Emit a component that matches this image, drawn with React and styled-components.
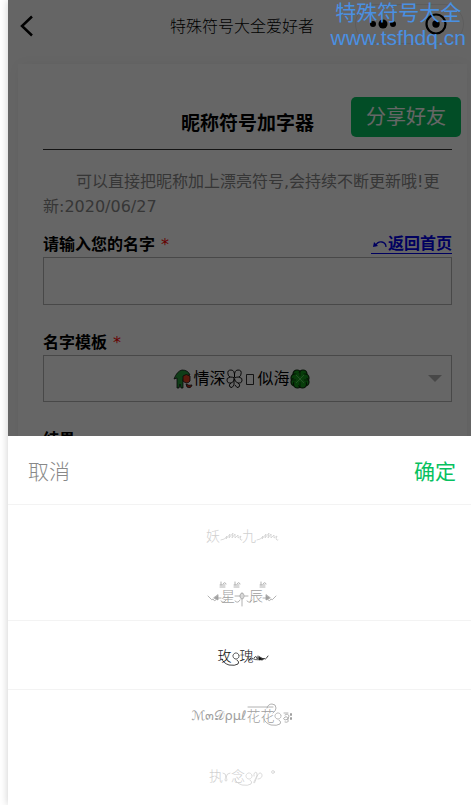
import React, { useState } from 'react';
import styled, { createGlobalStyle } from 'styled-components';

const GlobalStyle = createGlobalStyle`
    * {
        box-sizing: border-box;
    }

    body {
        margin: 0;
        background: #fff;
        overflow: hidden;
        font-family: 'DejaVu Sans', 'Noto Sans CJK SC', sans-serif;
        font-size: 16px;
        color: #000;
    }

    button, input, select {
        font-family: inherit;
    }
`;

const Frame = styled.div`
    overflow: hidden;
`;

const Phone = styled.div`
    position: relative;
    height: 100vh;
    margin: 0 -5px 0 8px;
    overflow: clip;
    background: #fdfdfd;
    box-shadow: 0 0 8px rgba(0, 0, 0, 0.2);
`;

const NavBar = styled.header`
    display: grid;
    grid-template-columns: 110px 1fr 110px;
    align-items: center;
    height: 52px;
    padding: 0 10px;
`;

const BackButton = styled.button`
    display: flex;
    width: 20px;
    padding: 0;
    border: 0;
    background: none;
`;

const NavTitle = styled.div`
    padding-bottom: 2px;
    text-align: center;
    white-space: nowrap;
    font-family: 'Noto Sans CJK SC', sans-serif;
    font-weight: 300;
`;

const Capsule = styled.div`
    display: flex;
    align-items: center;
    justify-content: space-between;
    width: 109px;
    height: 40px;
    margin: 0 0 4px -1px;
    padding: 0 16px 0 13px;
    border: 1px solid #e8e8e8;
    border-radius: 20px;
`;

const Card = styled.main`
    margin: 12px 9px 0 10px;
    padding: 36px 15px 0 25px;
    min-height: 600px;
    background: #fff;
    box-shadow: 0 0 14px rgba(0, 0, 0, 0.06);
`;

const Heading = styled.h1`
    margin: 0 0 19px;
    height: 50px;
    border-bottom: 1px solid #333;
    font-family: 'Noto Sans CJK SC', sans-serif;
    font-size: 19px;
    line-height: 44px;
    text-align: center;
`;

const ShareButton = styled.button`
    position: absolute;
    top: 97px;
    right: 15px;
    height: 40px;
    padding: 0 15px;
    border: 0;
    border-radius: 5px;
    background: #07c160;
    color: #fff;
    font-size: 20px;
    font-weight: 400;
    line-height: 40px;
`;

const Intro = styled.p`
    margin: 0 0 13px;
    color: #888;
    line-height: 25px;
    text-indent: 33px;
`;

const Field = styled.div`
    display: grid;
    grid-template-columns: 1fr auto;
    margin-bottom: 25px;
    font-weight: bold;
    line-height: 25px;
`;

const Star = styled.span`
    margin-left: 6px;
    color: #f00;
    font-weight: 400;
`;

const HomeLink = styled.a`
    display: flex;
    align-items: center;
    align-self: end;
    height: 22px;
    margin-bottom: 3px;
    padding-top: 2px;
    border-bottom: 1px solid #00e;
    color: #00e;
    text-decoration: none;
`;

const TextBox = styled.input`
    grid-column: 1 / -1;
    width: 100%;
    height: 48px;
    padding: 0 12px;
    border: 1px solid #b4b4b4;
    border-radius: 0;
    background: transparent;
    font-size: 16px;
`;

const SelectBox = styled.div`
    grid-column: 1 / -1;
    display: grid;
    height: 47px;
    border: 1px solid #b4b4b4;

    > * {
        grid-area: 1 / 1;
    }
`;

const Select = styled.select`
    appearance: none;
    width: 100%;
    border: 0;
    background: transparent;
`;

const SelectValue = styled.div`
    display: flex;
    align-items: center;
    justify-content: center;
    padding-right: 12px;
    font-weight: 400;
    pointer-events: none;
`;

const Caret = styled.span`
    align-self: center;
    justify-self: end;
    margin-right: 9px;
    border: 7px solid transparent;
    border-top-color: #b4b4b4;
    border-bottom: 0;
    pointer-events: none;
`;

const Mask = styled.div`
    position: absolute;
    inset: 0;
    background: rgba(0, 0, 0, 0.6);
`;

const Sheet = styled.section`
    position: absolute;
    left: 0;
    right: 0;
    bottom: 0;
    background: #fff;
`;

const SheetBar = styled.div`
    display: flex;
    align-items: center;
    justify-content: space-between;
    height: 69px;
    padding: 4px 20px 0;
    border-bottom: 1px solid #f3f3f3;
`;

const SheetButton = styled.button`
    padding: 0;
    border: 0;
    background: none;
    color: ${(props) => (props.$primary ? '#07c160' : '#888')};
    font-size: 21px;
    font-weight: ${(props) => (props.$primary ? 400 : 300)};
    line-height: 30px;
`;

const Wheel = styled.div`
    display: grid;
    align-items: center;

    > * {
        grid-area: 1 / 1;
    }
`;

const Band = styled.div`
    height: 70px;
    border: solid #f3f3f3;
    border-width: 1px 0;
`;

const Items = styled.ul`
    margin: 0;
    padding: 0;
    list-style: none;
`;

const Item = styled.li`
    display: flex;
    align-items: center;
    justify-content: center;
    height: 60px;
    color: ${(props) => ['#111', '#a0a0a0', '#d0d0d0'][props.$distance]};
    font-size: 14px;
    font-weight: 300;
    white-space: pre;
`;

const Script = styled.span`
    font-family: 'DejaVu Sans', 'DejaVu Serif', serif;
    font-size: 13px;
    font-weight: 400;
`;

const Flourish = styled.svg`
    flex: none;
    overflow: visible;
    fill: none;
    stroke: currentColor;
    stroke-width: 0.8;
    stroke-linecap: round;
`;

const Watermark = styled.div`
    position: absolute;
    top: 0;
    right: 10px;
    color: #4a90e2;
    font-family: 'Liberation Sans', 'Noto Sans CJK SC', sans-serif;
    font-size: 21px;
    line-height: 25px;
    text-align: center;
    pointer-events: none;
`;

const Wave = () => (
    <Flourish width="22" height="14">
        <path d="M1 12q4 0 6-4l-1 3 4-5-1 4 4-5-1 5 3-4v4l3-3v3l3-2-1 3q1 2 2 1" />
    </Flourish>
);

const Mark = ({ x }) => <path d={`M${x} -1h5M${x} -3h5M${x + 1} -6v3M${x + 3} -4q2-3 3 0`} />;

// little vine that closes a name: loop, arrow head, tail
const Vine = ({ flip }) => (
    <Flourish width="13" height="14">
        <g transform={flip ? 'translate(13 0) scale(-1 1)' : undefined}>
            <path d="M0 10h4M5 12q2 2 3-1 1 2 3-1l2-2" />
            <path d="M3 7v5l4-2z" fill="currentColor" />
        </g>
    </Flourish>
);

const Hook = () => (
    <Flourish width="8" height="14">
        <circle cx="4" cy="8" r="3" strokeDasharray="1 0.7" strokeWidth="0.7" />
        <path d="M-10 11q1 4 7 6 6 1 9-1 2-2-1-4" />
    </Flourish>
);

const NAMES = [
    <>妖<Wave />九<Wave /></>,
    <>
        <Vine flip />
        <span>星</span>
        <Flourish width="14" height="14">
            <Mark x={-15} />
            <Mark x={-1} />
            <path d="M0 8h5M9 8h4M7 5v13M5 8q0-3 2-3t2 3-2 3-2-3M-14 13q3 3 5-1M0 13q3 3 5-1M12 13q3 3 5-1" />
            <Mark x={25} />
        </Flourish>
        <span>辰</span>
        <Vine />
    </>,
    <>
        玫<Hook />瑰
        <Flourish width="13" height="14">
            <path d="M-5 12q3-4 4-1M0 10q2-3 3 0t-3 1M4 8v4M7 12q2 1 3-2 1 3 4-2" />
            <path d="M5 9v3l4-1z" fill="currentColor" />
        </Flourish>
    </>,
    <>
        <Script>ℳ๓𝒟ρμℓ</Script>花花<Hook />
        <Flourish width="10" height="14">
            <path d="M-34-1h25M-15 0q1-4 5-4t4 4q0 3-3 5M2 5h4M3 7q3-2 4 1 0 4-4 4-3-1 0-3 3-1 3 3 1 3-3 2" />
            <path d="M9 6v1M9 10v1" strokeWidth="2" />
        </Flourish>
    </>,
    <>
        执
        <Flourish width="8" height="14">
            <path d="M0 5q3 0 3 4 1-4 4-4M3 9q-2 4 0 4t0-4" />
        </Flourish>
        念<Hook />
        <Flourish width="10" height="14">
            <path d="M1 8C0 4 4 3 4 6c0 4-4 8-3 9s3-10 6-10 3 6-2 6" />
        </Flourish>
        <Flourish width="12" height="14">
            <circle cx="10" cy="4" r="1.4" />
        </Flourish>
    </>,
];

const Rose = () => (
    <svg width="20" height="20" viewBox="0 0 20 20" stroke="#111" strokeWidth="0.8">
        <path d="M1 10Q4 2 9 1q6 0 8 5l-5 1-2 4v8H8l-1-4-1 4H4V9z" fill="#2a9b3e" />
        <path d="M10 7q3-3 7 0v5q-3 4-7 0z" fill="#e43f20" />
        <path d="M13 15q3 2 6 1-1 4-5 2z" fill="#c92b1a" />
    </svg>
);

const Butterfly = () => (
    <svg width="17" height="20" viewBox="0 0 17 20" fill="none" stroke="#000" strokeWidth="0.9">
        <path d="M8.500 8Q9 1 5 1T2 5q0 2 2 3-4 1-3 4t4 2q-3 2-1 4t4-2V8M8.500 8Q8 1 12 1t3 4q0 2-2 3 4 1 3 4t-4 2q3 2 1 4t-4-2M4 8q3 0 4.500 1Q10 8 13 8M5 14q3-1 3.500-4 .5 3 3.500 4" />
    </svg>
);

const Clover = () => (
    <svg width="20" height="20" viewBox="0 0 20 20">
        <g fill="#149a1c" stroke="#0a2a0a" strokeWidth="1.200">
            <circle cx="7" cy="5" r="4" />
            <circle cx="13" cy="5" r="4" />
            <circle cx="5" cy="9" r="4" />
            <circle cx="15" cy="9" r="4" />
            <circle cx="5" cy="13" r="4" />
            <circle cx="15" cy="13" r="4" />
            <circle cx="7.500" cy="15" r="4" />
            <circle cx="12.500" cy="15" r="4" />
        </g>
        <circle cx="10" cy="10" r="6.500" fill="#149a1c" />
        <path d="M6 6l8 8M14 6l-8 8" stroke="#5ac85a" />
        <path d="M10 2v5M10 13v5M2 11h4M14 11h4" stroke="#0a2a0a" strokeWidth="0.8" />
    </svg>
);

const App = () => {
    const [name, setName] = useState('');
    const selected = 2;

    return (
        <Frame>
            <GlobalStyle />
            <Phone>
                <NavBar>
                    <BackButton aria-label="返回">
                        <svg width="16" height="22" viewBox="0 0 16 22" fill="none" stroke="#000" strokeWidth="2.5">
                            <path d="M14 1.500L4 11l10 9.500" />
                        </svg>
                    </BackButton>
                    <NavTitle>特殊符号大全爱好者</NavTitle>
                    <Capsule>
                        <svg width="28" height="10">
                            <circle cx="4" cy="5" r="3" />
                            <circle cx="14" cy="5" r="4.500" />
                            <circle cx="24" cy="5" r="3" />
                        </svg>
                        <svg width="22" height="22">
                            <circle cx="11" cy="11" r="9.500" fill="none" stroke="#000" strokeWidth="2.200" />
                            <circle cx="11" cy="11" r="3.700" />
                        </svg>
                    </Capsule>
                </NavBar>

                <Card>
                    <Heading>昵称符号加字器</Heading>
                    <Intro>可以直接把昵称加上漂亮符号,会持续不断更新哦!更新:2020/06/27</Intro>

                    <Field>
                        <label htmlFor="name">请输入您的名字<Star>*</Star></label>
                        <HomeLink href="#home">
                            <svg width="17" height="12" fill="none" stroke="#00e" strokeWidth="1.300">
                                <path d="M4 8q3-5 7-4 4 1 4 5" />
                                <path d="M2 9l1-5 4 4z" fill="#00e" stroke="none" />
                            </svg>
                            返回首页
                        </HomeLink>
                        <TextBox id="name" value={name} onChange={(e) => setName(e.target.value)} />
                    </Field>

                    <Field>
                        <label htmlFor="template">名字模板<Star>*</Star></label>
                        <SelectBox>
                            <Select id="template">
                                <option aria-label="情深似海" />
                            </Select>
                            <SelectValue>
                                <Rose />情深<Butterfly />
                                <svg width="15" height="16" fill="none" stroke="#000" strokeWidth="0.8">
                                    <path d="M3.500 3.500h7v10h-7z" />
                                </svg>
                                似海<Clover />
                            </SelectValue>
                            <Caret />
                        </SelectBox>
                    </Field>

                    <Field>
                        <label htmlFor="result">结果</label>
                        <TextBox id="result" readOnly />
                    </Field>
                </Card>

                <ShareButton>分享好友</ShareButton>
                <Mask />

                <Sheet>
                    <SheetBar>
                        <SheetButton>取消</SheetButton>
                        <SheetButton $primary>确定</SheetButton>
                    </SheetBar>
                    <Wheel>
                        <Band />
                        <Items>
                            {NAMES.map((item, i) => (
                                <Item key={i} $distance={Math.abs(i - selected)}>{item}</Item>
                            ))}
                        </Items>
                    </Wheel>
                </Sheet>

                <Watermark>
                    <div>特殊符号大全</div>
                    <div>www.tsfhdq.cn</div>
                </Watermark>
            </Phone>
        </Frame>
    );
};

export default App;
